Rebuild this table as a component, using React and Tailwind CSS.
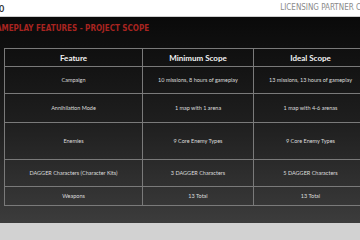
const rows = [
  { feature: 'Campaign', min: '10 missions, 8 hours of gameplay', ideal: '13 missions, 13 hours of gameplay', h: 'h-[27px]' },
  { feature: 'Annihilation Mode', min: '1 map with 1 arena', ideal: '1 map with 4-6 arenas', h: 'h-[29px]' },
  { feature: 'Enemies', min: '9 Core Enemy Types', ideal: '9 Core Enemy Types', h: 'h-[37px]' },
  { feature: 'DAGGER Characters (Character Kits)', min: '3 DAGGER Characters', ideal: '5 DAGGER Characters', h: 'h-[27px]' },
  { feature: 'Weapons', min: '13 Total', ideal: '13 Total', h: 'h-[19px]' },
]

export default function App() {
  return (
    <div className="w-[360px] h-[240px] overflow-hidden flex flex-col bg-[#d3d3d3] font-['Lato',sans-serif]">
      {/* top bar */}
      <div className="h-[17px] shrink-0 bg-white border-b border-[#cfcfcf] flex items-center justify-between">
        <span className="text-[9px] leading-none font-bold text-[#333] -ml-[1px]">0</span>
        <span className="text-[8px] leading-none text-[#8a8a8a] font-['DejaVu_Sans_Condensed',sans-serif] font-light -mr-[1px]">
          LICENSING PARTNER C
        </span>
      </div>

      {/* dark slide */}
      <div className="h-[206px] shrink-0 bg-gradient-to-b from-[#0a0a0a] via-[#1e1e1e] to-[#3c3c3c] pt-[7px]">
        <div className="text-[8px] leading-[10px] font-bold text-[#a82420] -ml-[10px] font-['DejaVu_Sans_Condensed',sans-serif]">
          GAMEPLAY FEATURES - PROJECT SCOPE
        </div>

        <div className="ml-[4px] mt-[14px] w-[370px] border-t border-l border-[#7a7a7a]">
          <div className="flex h-[18px] border-b border-[#7a7a7a] text-[#f2f2f2] text-[8px] font-bold">
            <div className="w-[138px] border-r border-[#7a7a7a] flex items-center justify-center">Feature</div>
            <div className="w-[111px] border-r border-[#7a7a7a] flex items-center justify-center">Minimum Scope</div>
            <div className="w-[114px] border-r border-[#7a7a7a] flex items-center justify-center">Ideal Scope</div>
          </div>
          {rows.map((r) => (
            <div key={r.feature} className={`flex ${r.h} border-b border-[#7a7a7a] text-[#dcdcdc] text-[5.5px]`}>
              <div className="w-[138px] border-r border-[#7a7a7a] flex items-center justify-center">{r.feature}</div>
              <div className="w-[111px] border-r border-[#7a7a7a] flex items-center justify-center">{r.min}</div>
              <div className="w-[114px] border-r border-[#7a7a7a] flex items-center justify-center">{r.ideal}</div>
            </div>
          ))}
        </div>
      </div>

      <div className="flex-1 bg-[#d2d2d2]" />
    </div>
  )
}
